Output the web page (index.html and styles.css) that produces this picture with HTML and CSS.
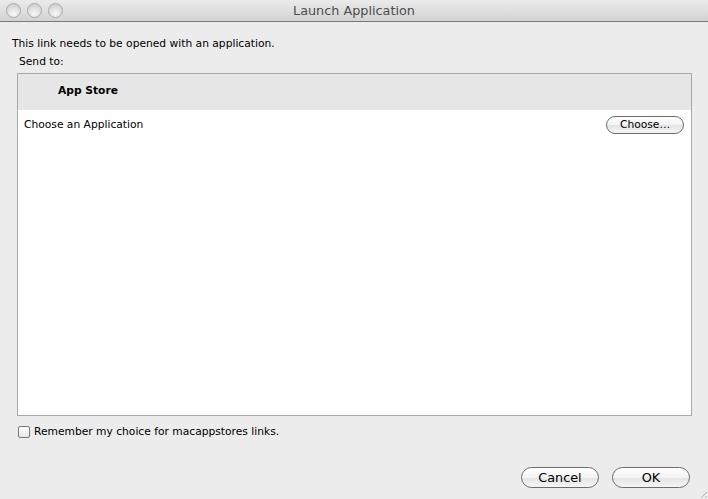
FILE: index.html
```html
<!DOCTYPE html>
<html>
<head>
<meta charset="utf-8">
<link rel="stylesheet" href="styles.css">
</head>
<body>
<div class="window">
  <div class="titlebar">
    <div class="lights">
      <span class="light"></span><span class="light"></span><span class="light"></span>
    </div>
    <div class="title">Launch Application</div>
  </div>
  <div class="content">
    <p class="intro">This link needs to be opened with an application.</p>
    <p class="sendto">Send to:</p>
    <div class="list">
      <div class="list-header">App Store</div>
      <div class="list-row">
        <span>Choose an Application</span>
        <button class="btn small">Choose…</button>
      </div>
    </div>
    <label class="remember"><span class="check"></span>Remember my choice for macappstores links.</label>
    <div class="actions">
      <button class="btn big">Cancel</button>
      <button class="btn big">OK</button>
    </div>
  </div>
  <svg class="grip" width="12" height="12" viewBox="0 0 12 12"><path d="M11 5 L5 11 M11 9 L9 11" stroke="#b0b0b0" stroke-width="1" fill="none"/></svg>
</div>
</body>
</html>
```
FILE: styles.css
```css
html, body {
  margin: 0;
  padding: 0;
}
body {
  width: 708px;
  height: 499px;
  overflow: hidden;
  font-family: "DejaVu Sans", "Liberation Sans", sans-serif;
  font-size: 10.7px;
  color: #000;
  background: #ececec;
}
.window {
  position: relative;
  width: 708px;
  height: 499px;
  display: flex;
  flex-direction: column;
}
.titlebar {
  height: 21px;
  flex: none;
  background: linear-gradient(#ebebeb, #d2d2d2);
  border-bottom: 1px solid #7a7a7a;
  display: flex;
  align-items: center;
  position: relative;
}
.lights {
  display: flex;
  gap: 6px;
  padding-left: 6px;
  position: relative;
  z-index: 1;
}
.light {
  width: 15px;
  height: 15px;
  border-radius: 50%;
  box-sizing: border-box;
  border: 1px solid #ababab;
  background: radial-gradient(circle at 50% 75%, #f8f8f8, #d8d8d8 65%, #c4c4c4);
}
.title {
  position: absolute;
  left: 0;
  right: 0;
  top: 0;
  line-height: 21px;
  text-align: center;
  font-size: 12.8px;
  color: #4d4d4d;
}
.content {
  flex: 1;
  display: flex;
  flex-direction: column;
  padding: 0 16px 0 17px;
}
.intro {
  margin: 14px 0 0 -5px;
  line-height: 15px;
}
.sendto {
  margin: 3px 0 0 2px;
  line-height: 15px;
}
.list {
  margin-top: 4px;
  height: 341px;
  border: 1px solid #a8a8a8;
  background: #fff;
  display: flex;
  flex-direction: column;
}
.list-header {
  height: 36px;
  box-sizing: border-box;
  padding-bottom: 3px;
  background: #e6e6e6;
  font-weight: bold;
  padding-left: 40px;
  display: flex;
  align-items: center;
}
.list-row {
  height: 29px;
  display: flex;
  align-items: center;
  justify-content: space-between;
  padding: 0 7px 0 6px;
}
.btn {
  font-family: inherit;
  font-size: 10.7px;
  color: #000;
  border: 1px solid #6c6c6c;
  border-radius: 10px;
  background: linear-gradient(#ffffff 0%, #f3f3f3 50%, #e3e3e3 51%, #f6f6f6 100%);
  padding: 0;
}
.btn.small {
  width: 78px;
  height: 18px;
  border-radius: 9px;
}
.btn.big {
  width: 78px;
  height: 21px;
  font-size: 12.8px;
  border-radius: 11px;
}
.remember {
  display: flex;
  align-items: center;
  margin-top: 9px;
  margin-left: 1px;
  line-height: 14px;
}
.check {
  width: 12px;
  height: 12px;
  box-sizing: border-box;
  border: 1px solid #777;
  border-radius: 2px;
  background: linear-gradient(#fff, #e8e8e8);
  margin-right: 4px;
}
.actions {
  margin-top: 28px;
  display: flex;
  justify-content: flex-end;
  gap: 13px;
  padding-right: 2px;
}
.grip {
  position: absolute;
  right: 0;
  bottom: 0;
}
```
